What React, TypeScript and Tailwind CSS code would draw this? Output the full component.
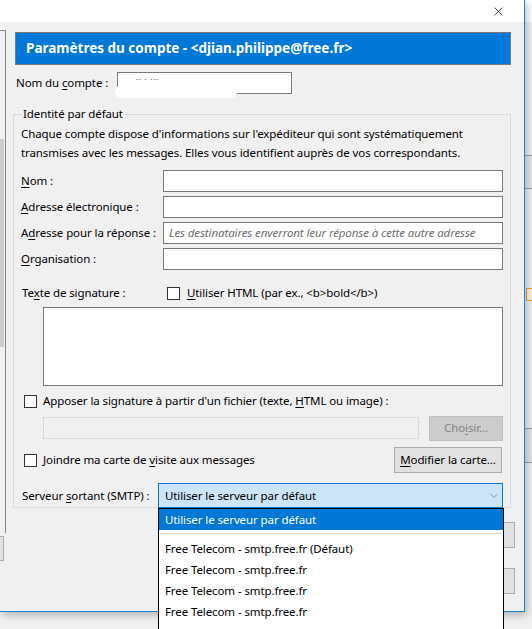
import { ChevronDown, X } from "lucide-react";

const U = ({ children }: { children: string }) => <span className="underline underline-offset-2">{children}</span>;

function TextBox({ placeholder, className = "" }: { placeholder?: string; className?: string }) {
    return (
        <div className={`h-[22px] border border-[#7a7a7a] bg-white flex items-center px-[5px] ${className}`}>
            {placeholder && <span className="italic text-[#6d6d6d] whitespace-nowrap">{placeholder}</span>}
        </div>
    );
}

function CheckBox() {
    return <span className="w-[13px] h-[13px] border border-[#333] bg-white shrink-0"></span>;
}

const identityRows: { label: React.ReactNode; placeholder?: string }[] = [
    { label: <><U>N</U>om :</> },
    { label: <><U>A</U>dresse électronique :</> },
    { label: <>A<U>d</U>resse pour la réponse :</>, placeholder: "Les destinataires enverront leur réponse à cette autre adresse" },
    { label: <><U>O</U>rganisation :</> },
];

const smtpOptions = [
    "Free Telecom - smtp.free.fr (Défaut)",
    "Free Telecom - smtp.free.fr",
    "Free Telecom - smtp.free.fr",
    "Free Telecom - smtp.free.fr",
    "Free Telecom - smtp.free.fr",
];

export default function App() {
    return (
        <div className="relative w-[532px] h-[629px] overflow-hidden bg-[#f0f0f0] text-[11.5px] tracking-[-0.1px] text-black font-['Segoe_UI','Noto_Sans',sans-serif]">
            <div className="flex h-full">
                {/* account settings window */}
                <div className="w-[525px] h-[612px] flex flex-col border-r border-b border-[#1883d7] shadow-[2px_3px_8px_rgba(0,0,0,0.25)] bg-[#f0f0f0] relative z-10">
                    <div className="h-[22px] bg-white flex justify-end items-center pr-[18px] shrink-0">
                        <X className="w-[15px] h-[15px] text-black" strokeWidth={1.1} />
                    </div>
                    <div className="flex flex-1">
                        {/* left tree panel, cut off */}
                        <div className="w-[6px] flex flex-col shrink-0">
                            <div className="mt-[8px] h-[503px] border-t border-r border-[#828790] bg-[#f0f0f0] relative">
                                <div className="absolute left-0 top-[108px] w-[4px] h-[208px] bg-[#cdcdcd]"></div>
                            </div>
                            <div className="mt-[3px] h-[25px] w-[4px] border border-l-0 border-[#adadad] bg-[#e1e1e1]"></div>
                        </div>

                        <div className="flex-1 pl-[9px] pr-[20px] pt-[10px]">
                            <div className="h-[33px] bg-[#0078d7] border border-[#7a7a7a] flex items-center pl-[10px] text-white text-[13.5px] tracking-normal font-bold">
                                Paramètres du compte - &lt;djian.philippe@free.fr&gt;
                            </div>

                            <div className="mt-[7px] flex items-center h-[22px]">
                                <span className="pl-[1px] w-[102px]">Nom du <U>c</U>ompte :</span>
                                <div className="relative w-[175px] h-[22px] border border-[#7a7a7a] bg-white">
                                    <span className="absolute left-[18px] top-[3px] text-[7px] leading-none text-[#333] tracking-[1px]">·· · ···</span>
                                    <div className="absolute -left-[3px] top-[12px] w-[122px] h-[13px] bg-white rounded-full"></div>
                                </div>
                            </div>

                            <fieldset className="mt-[13px] -ml-[2px] w-[498px] h-[401px] border border-[#dcdcdc] pl-[7px] pr-[7px]">
                                <legend className="ml-[1px] px-[1px] leading-[14px]">Identité par défaut</legend>
                                <p className="leading-[19px] mt-[3px]">
                                    Chaque compte dispose d'informations sur l'expéditeur qui sont systématiquement
                                    <br />
                                    transmises avec les messages. Elles vous identifient auprès de vos correspondants.
                                </p>

                                <div className="mt-[8px] flex flex-col gap-[4px]">
                                    {identityRows.map((row, i) => (
                                        <div key={i} className="flex items-center">
                                            <span className="w-[142px] whitespace-nowrap">{row.label}</span>
                                            <TextBox placeholder={row.placeholder} className="flex-1" />
                                        </div>
                                    ))}
                                </div>

                                <div className="mt-[16px] flex items-center h-[14px]">
                                    <span className="w-[146px] pl-[1px]">Te<U>x</U>te de signature :</span>
                                    <CheckBox />
                                    <span className="ml-[7px]"><U>U</U>tiliser HTML (par ex., &lt;b&gt;bold&lt;/b&gt;)</span>
                                </div>

                                <div className="mt-[7px] ml-[22px] h-[79px] border border-[#7a7a7a] bg-white"></div>

                                <div className="mt-[8px] flex items-center h-[14px] pl-[3px]">
                                    <CheckBox />
                                    <span className="ml-[6px]">Apposer la signature à partir d'un fichier (texte, <U>H</U>TML ou image) :</span>
                                </div>

                                <div className="mt-[7px] ml-[22px] flex items-center gap-[10px] h-[26px]">
                                    <div className="w-[376px] h-[22px] border border-[#d9d9d9] bg-[#f0f0f0]"></div>
                                    <div className="w-[74px] h-[25px] border border-[#bfbfbf] bg-[#cccccc] flex items-center justify-center text-[#838383]">
                                        Cho<U>i</U>sir...
                                    </div>
                                </div>

                                <div className="mt-[6px] flex items-center justify-between pl-[3px] pr-[1px] h-[26px]">
                                    <div className="flex items-center">
                                        <CheckBox />
                                        <span className="ml-[6px]">Joindre ma carte de <U>v</U>isite aux messages</span>
                                    </div>
                                    <div className="w-[108px] h-[26px] border border-[#adadad] bg-[#e1e1e1] flex items-center justify-center">
                                        <U>M</U>odifier la carte...
                                    </div>
                                </div>

                                <div className="mt-[10px] flex items-center h-[25px] relative">
                                    <span className="w-[137px] pl-[1px]">Serveur <U>s</U>ortant (SMTP) :</span>
                                    <div className="flex-1 h-[25px] border border-[#0078d7] bg-[#cce4f7] flex items-center justify-between pl-[6px] pr-[2px]">
                                        <span>Utiliser le serveur par défaut</span>
                                        <ChevronDown className="w-[12px] h-[12px] text-[#555]" strokeWidth={1.2} />
                                    </div>

                                    {/* open list */}
                                    <div className="absolute left-[137px] top-[25px] w-[346px] h-[130px] border border-black border-b-0 bg-white z-20">
                                        <div className="h-[21px] bg-[#0078d7] text-white flex items-center pl-[6px]">Utiliser le serveur par défaut</div>
                                        <div className="mt-[3px] mx-[1px] h-px bg-[#d7d7d7]"></div>
                                        <div className="pt-[4px]">
                                            {smtpOptions.map((o, i) => (
                                                <div key={i} className="h-[21px] flex items-center pl-[6px]">{o}</div>
                                            ))}
                                        </div>
                                    </div>
                                </div>
                            </fieldset>

                            <div className="flex flex-col items-end gap-[20px] mt-[14px] -mr-[4px]">
                                <div className="w-[80px] h-[26px] border border-[#adadad] bg-[#e1e1e1]"></div>
                                <div className="w-[80px] h-[26px] border border-[#adadad] bg-[#e1e1e1]"></div>
                            </div>
                        </div>
                    </div>
                </div>

                {/* background application, visible on the right */}
                <div className="flex-1 flex flex-col">
                    <div className="h-[22px] bg-white"></div>
                    <div className="mt-[133px] h-[34px] border-y border-[#a0a0a0] bg-[#e6e6e6]"></div>
                    <div className="mt-[99px] ml-[1px] w-[8px] h-[13px] border border-[#e8a33d] bg-[#fdf3e0]"></div>
                    <div className="mt-[127px] h-[35px] border-y border-[#a0a0a0] bg-[#e6e6e6]"></div>
                </div>
            </div>
        </div>
    );
}
